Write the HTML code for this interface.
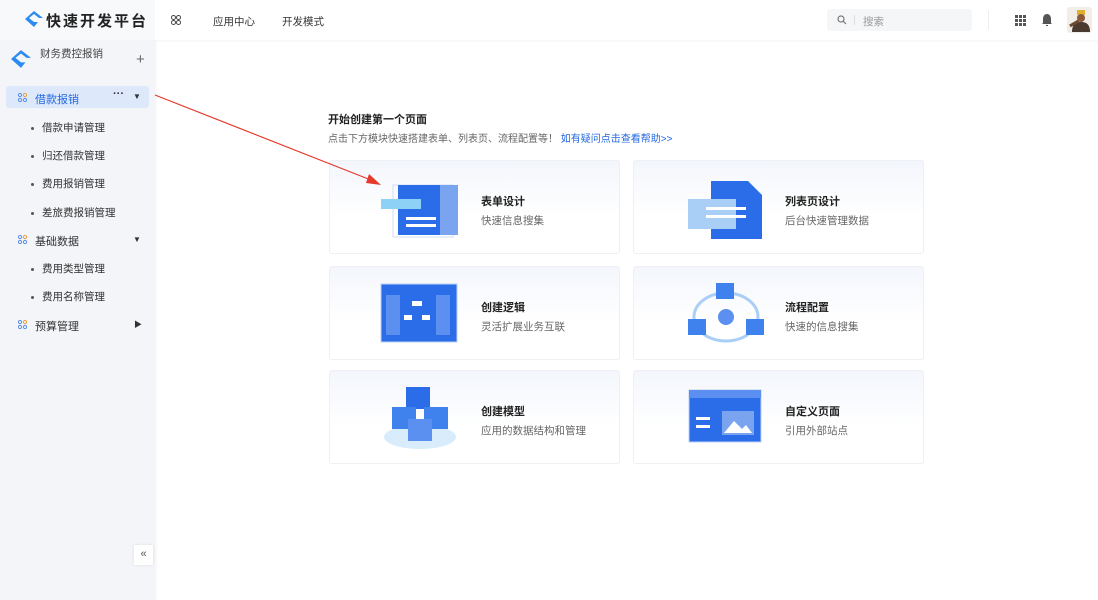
<!DOCTYPE html>
<html><head><meta charset="utf-8"><style>
*{margin:0;padding:0;box-sizing:border-box}
body{width:1098px;height:600px;overflow:hidden;background:#fff;font-family:"Liberation Sans","Noto Sans CJK SC",sans-serif;position:relative;font-size:12px;color:#333}
.abs{position:absolute}
.side{left:0;top:0;width:155px;height:600px;background:#f3f5f9;box-shadow:1px 0 3px rgba(0,0,0,.05)}
.top{left:155px;top:0;width:943px;height:40px;background:#fff;box-shadow:0 1px 3px rgba(0,0,0,.05)}
.card{width:291px;height:94px;border:1px solid #eef0f4;border-radius:3px;background:linear-gradient(180deg,#f3f6fc 0%,#fff 60%)}
.card .t{position:absolute;left:151px;top:32px;font-size:11px;font-weight:bold;color:#222}
.card .s{position:absolute;left:151px;top:52px;font-size:10.5px;color:#666}
.mi{font-size:10.5px;color:#333}
.dot{display:inline-block;width:3px;height:3px;background:#555;border-radius:50%;margin-right:8px;vertical-align:middle}
</style></head><body>
<div class="abs side"></div>
<div class="abs top"></div>
<div class="abs" style="left:0;top:0;width:155px;height:40px;background:#f8f9fb"></div>
<svg class="abs" style="left:25px;top:11px" width="18" height="16" viewBox="0 0 18 16"><path d="M9 0L18 7 14 7 9 3 4 7 9 11 13 11 9 16 0 8Z" fill="#2c8bf0"/></svg>
<div class="abs" style="left:46px;top:10px;font-size:15px;font-weight:bold;letter-spacing:2px;color:#222">快速开发平台</div>
<svg class="abs" style="left:171px;top:15px" width="10" height="10"><circle cx="2.5" cy="2.5" r="2" fill="none" stroke="#444"/><circle cx="7.5" cy="2.5" r="2" fill="none" stroke="#444"/><circle cx="2.5" cy="7.5" r="2" fill="none" stroke="#444"/><circle cx="7.5" cy="7.5" r="2" fill="none" stroke="#444"/></svg>
<div class="abs" style="left:213px;top:14px;font-size:10.5px;color:#333">应用中心</div>
<div class="abs" style="left:282px;top:14px;font-size:10.5px;color:#333">开发模式</div>
<div class="abs" style="left:827px;top:9px;width:145px;height:22px;background:#f5f6f8;border-radius:3px"></div>
<svg class="abs" style="left:837px;top:15px" width="10" height="10"><circle cx="4" cy="4" r="3" fill="none" stroke="#777" stroke-width="1.2"/><path d="M6.3 6.3L9 9" stroke="#777" stroke-width="1.2"/></svg>
<div class="abs" style="left:854px;top:15px;width:1px;height:10px;background:#ddd"></div>
<div class="abs" style="left:863px;top:14px;font-size:10.5px;color:#999">搜索</div>
<div class="abs" style="left:988px;top:10px;width:1px;height:20px;background:#eee"></div>
<svg class="abs" style="left:1015px;top:15px" width="11" height="11"><g fill="#555"><rect x="0" y="0" width="3" height="3"/><rect x="4" y="0" width="3" height="3"/><rect x="8" y="0" width="3" height="3"/><rect x="0" y="4" width="3" height="3"/><rect x="4" y="4" width="3" height="3"/><rect x="8" y="4" width="3" height="3"/><rect x="0" y="8" width="3" height="3"/><rect x="4" y="8" width="3" height="3"/><rect x="8" y="8" width="3" height="3"/></g></svg>
<svg class="abs" style="left:1041px;top:13px" width="12" height="14"><path d="M6 1C3 1 2 4 2 6V10L1 11H11L10 10V6C10 4 9 1 6 1Z M5 12H7V13H5Z" fill="#555"/></svg>
<div class="abs" style="left:1067px;top:7px;width:25px;height:26px;background:#f1eee9;border-radius:3px"></div>
<svg class="abs" style="left:1068px;top:8px" width="24" height="24"><rect x="9" y="2" width="8" height="5" fill="#e0b030"/><circle cx="13" cy="10" r="4" fill="#8a5a3a"/><path d="M4 24C4 16 8 14 13 14S22 16 22 24Z" fill="#4a3a30"/><rect x="1" y="14" width="10" height="3" fill="#6a4a30" transform="rotate(-30 6 15)"/></svg>

<svg class="abs" style="left:11px;top:50px" width="20" height="18" viewBox="0 0 18 16"><path d="M9 0L18 7 14 7 9 3 4 7 9 11 13 11 9 16 0 8Z" fill="#2c8bf0"/></svg>
<div class="abs" style="left:40px;top:46px;font-size:10.5px;color:#444">财务费控报销</div>
<div class="abs" style="left:136px;top:51px;font-size:15px;color:#666">+</div>
<div class="abs" style="left:6px;top:86px;width:143px;height:22px;background:#dde9fb;border-radius:3px"></div>
<svg class="abs" style="left:18px;top:93px" width="9" height="9"><g fill="none" stroke="#5a8ee8"><circle cx="2" cy="2" r="1.6"/><circle cx="7" cy="2" r="1.6" stroke="#e8a040"/><circle cx="2" cy="7" r="1.6"/><circle cx="7" cy="7" r="1.6"/></g></svg>
<div class="abs" style="left:35px;top:91px;font-size:11px;color:#2468e0">借款报销</div>
<div class="abs" style="left:113px;top:88px;font-size:11px;color:#333;font-weight:bold">···</div>
<div class="abs" style="left:133px;top:92px;font-size:8px;color:#333">▼</div>
<div class="abs mi" style="left:31px;top:120px"><span class="dot"></span>借款申请管理</div>
<div class="abs mi" style="left:31px;top:148px"><span class="dot"></span>归还借款管理</div>
<div class="abs mi" style="left:31px;top:176px"><span class="dot"></span>费用报销管理</div>
<div class="abs mi" style="left:31px;top:205px"><span class="dot"></span>差旅费报销管理</div>
<svg class="abs" style="left:18px;top:235px" width="9" height="9"><g fill="none" stroke="#5a8ee8"><circle cx="2" cy="2" r="1.6"/><circle cx="7" cy="2" r="1.6" stroke="#e8a040"/><circle cx="2" cy="7" r="1.6"/><circle cx="7" cy="7" r="1.6"/></g></svg>
<div class="abs" style="left:35px;top:233px;font-size:11px;color:#333">基础数据</div>
<div class="abs" style="left:133px;top:235px;font-size:8px;color:#333">▼</div>
<div class="abs mi" style="left:31px;top:261px"><span class="dot"></span>费用类型管理</div>
<div class="abs mi" style="left:31px;top:289px"><span class="dot"></span>费用名称管理</div>
<svg class="abs" style="left:18px;top:320px" width="9" height="9"><g fill="none" stroke="#5a8ee8"><circle cx="2" cy="2" r="1.6"/><circle cx="7" cy="2" r="1.6" stroke="#e8a040"/><circle cx="2" cy="7" r="1.6"/><circle cx="7" cy="7" r="1.6"/></g></svg>
<div class="abs" style="left:35px;top:318px;font-size:11px;color:#333">预算管理</div>
<div class="abs" style="left:134px;top:319px;font-size:8px;color:#333">▶</div>
<div class="abs" style="left:134px;top:545px;width:19px;height:20px;background:#fff;font-size:11px;color:#555;text-align:center;line-height:19px;box-shadow:0 0 3px rgba(0,0,0,.1)">«</div>

<div class="abs" style="left:328px;top:111px;font-size:11px;font-weight:bold;color:#222">开始创建第一个页面</div>
<div class="abs" style="left:328px;top:130px;font-size:10px;color:#666">点击下方模块快速搭建表单、列表页、流程配置等！ <span style="color:#2468e0">如有疑问点击查看帮助&gt;&gt;</span></div>

<div class="abs card" style="left:329px;top:160px"><svg class="abs" style="left:48px;top:18px" width="80" height="62"><rect x="15" y="6" width="60" height="52" fill="none" stroke="#cfdcf5"/><rect x="20" y="6" width="60" height="50" fill="#2b6de8"/><rect x="62" y="6" width="18" height="50" fill="#7ba4f0"/><rect x="3" y="20" width="40" height="10" fill="#8ed1f7"/><rect x="28" y="38" width="30" height="3" fill="#fff"/><rect x="28" y="45" width="30" height="3" fill="#fff"/></svg><div class="t">表单设计</div><div class="s">快速信息搜集</div></div>
<div class="abs card" style="left:633px;top:160px"><svg class="abs" style="left:52px;top:18px" width="80" height="62"><path d="M25 2H62L76 16V60H25Z" fill="#2b6de8"/><rect x="2" y="20" width="48" height="30" fill="#a9cff7"/><rect x="20" y="28" width="40" height="3" fill="#fff"/><rect x="20" y="36" width="40" height="3" fill="#fff"/></svg><div class="t">列表页设计</div><div class="s">后台快速管理数据</div></div>
<div class="abs card" style="left:329px;top:266px"><svg class="abs" style="left:48px;top:14px" width="84" height="64"><rect x="3" y="3" width="76" height="58" fill="#2b6de8" stroke="#bcd0f5"/><rect x="8" y="14" width="14" height="40" fill="#5b8ff0"/><rect x="58" y="14" width="14" height="40" fill="#5b8ff0"/><rect x="34" y="20" width="10" height="5" fill="#fff"/><rect x="26" y="34" width="8" height="5" fill="#fff"/><rect x="44" y="34" width="8" height="5" fill="#fff"/></svg><div class="t">创建逻辑</div><div class="s">灵活扩展业务互联</div></div>
<div class="abs card" style="left:633px;top:266px"><svg class="abs" style="left:50px;top:12px" width="84" height="66"><ellipse cx="42" cy="38" rx="32" ry="24" fill="none" stroke="#a9cff7" stroke-width="3"/><rect x="32" y="4" width="18" height="16" fill="#3f82ee"/><rect x="4" y="40" width="18" height="16" fill="#3f82ee"/><rect x="62" y="40" width="18" height="16" fill="#3f82ee"/><circle cx="42" cy="38" r="8" fill="#5b8ff0"/></svg><div class="t">流程配置</div><div class="s">快速的信息搜集</div></div>
<div class="abs card" style="left:329px;top:370px"><svg class="abs" style="left:48px;top:12px" width="84" height="70"><ellipse cx="42" cy="54" rx="36" ry="12" fill="#d8ecfb"/><rect x="28" y="4" width="24" height="22" fill="#2b6de8"/><rect x="14" y="24" width="24" height="22" fill="#3f82ee"/><rect x="46" y="24" width="24" height="22" fill="#3f82ee"/><rect x="30" y="36" width="24" height="22" fill="#5b8ff0"/></svg><div class="t">创建模型</div><div class="s">应用的数据结构和管理</div></div>
<div class="abs card" style="left:633px;top:370px"><svg class="abs" style="left:50px;top:16px" width="84" height="60"><rect x="5" y="3" width="72" height="52" fill="#2b6de8" stroke="#bcd0f5"/><rect x="5" y="3" width="72" height="8" fill="#5b8ff0"/><rect x="12" y="30" width="14" height="3" fill="#fff"/><rect x="12" y="38" width="14" height="3" fill="#fff"/><rect x="38" y="24" width="32" height="24" fill="#7ba4f0"/><path d="M40 46L50 34 58 42 62 38 68 46Z" fill="#fff"/></svg><div class="t">自定义页面</div><div class="s">引用外部站点</div></div>

<svg class="abs" style="left:150px;top:90px;z-index:5" width="240" height="100"><path d="M5 5L226 92" stroke="#e53a2a" stroke-width="1.2"/><path d="M231 95L219 84 216 93Z" fill="#e53a2a"/></svg>
</body></html>
